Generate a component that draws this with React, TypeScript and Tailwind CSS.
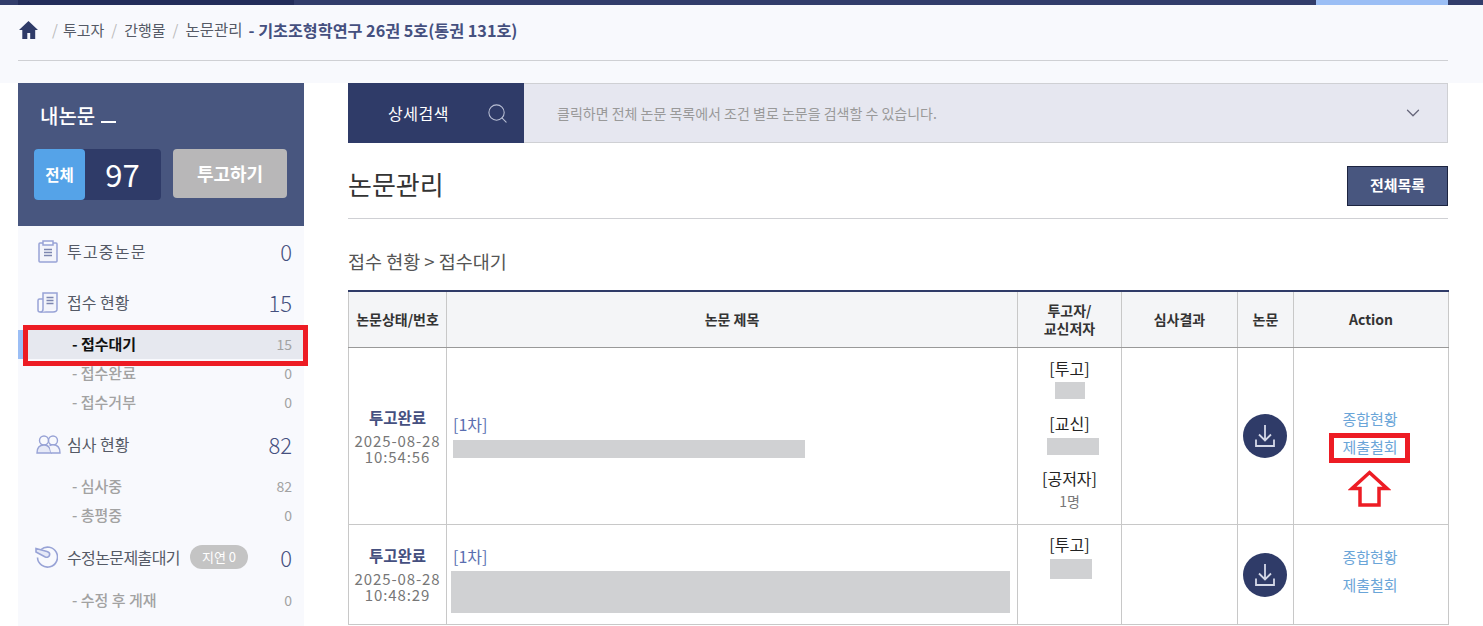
import { Search, ChevronDown } from 'lucide-react';

const FONT = '"Noto Sans CJK KR", "Noto Sans", sans-serif';

function ClipboardIcon() {
  return (
    <svg width="20" height="23" viewBox="0 0 20 23" fill="none" stroke="#98a3d6" strokeWidth="1.5" className="ml-[3px]">
      <rect x="1" y="3" width="18" height="19" rx="1" fill="#f3f4fb" />
      <rect x="5" y="1" width="10" height="4" fill="#f8f9fd" />
      <path d="M6 9.500h8M6 12.500h8M6 15.500h8" stroke="#7d86b0" />
    </svg>
  );
}

function DocsIcon() {
  return (
    <svg width="21" height="21" viewBox="0 0 21 21" fill="none" stroke="#98a3d6" strokeWidth="1.5" className="ml-[2px]">
      <path d="M6 7H2.500A1.500 1.500 0 0 0 1 8.500V18a2 2 0 0 0 2 2h13c2 0 4-1 4-3" />
      <path d="M3.500 20c1.500 0 2.500-1 2.500-3V1h14v16" fill="#f3f4fb" />
      <path d="M9.500 5.500h7M9.500 8.500h7M9.500 11.500h7" stroke="#7d86b0" />
    </svg>
  );
}

function PeopleIcon() {
  return (
    <svg width="25" height="19" viewBox="0 0 25 19" fill="none" stroke="#98a3d6" strokeWidth="1.4" className="ml-[1px]">
      <circle cx="8" cy="5.500" r="4.500" />
      <circle cx="17" cy="5.500" r="4.500" />
      <path d="M1 18c0-5 2.500-8 7-8 3 0 5 1.500 6 4l1 4z" fill="#e6e9f7" />
      <path d="M13.500 10.500c1-.5 2.300-.7 3.500-.7 4.500 0 7 3.200 7 8.200H15" fill="#f3f4fb" />
    </svg>
  );
}

function TimerIcon() {
  return (
    <svg width="23" height="22" viewBox="0 0 23 22" fill="none" stroke="#98a3d6" strokeWidth="1.6">
      <path d="M6 3.500a10 10 0 1 1-3.500 8" />
      <path d="M1 2.500 12 5.500c2 .6 3 2 2.600 3.500-.5 2-2.500 2.800-4.300 2L1 6z" fill="#e6e9f7" />
    </svg>
  );
}

function DownloadIcon() {
  return (
    <svg width="22" height="24" viewBox="0 0 22 24" fill="none" stroke="#d5d9e8" strokeWidth="1.8">
      <path d="M11 1v15M5 10.500l6 6 6-6" />
      <path d="M2 15.500V22h18v-6.500" />
    </svg>
  );
}

function MenuRow({ icon, label, count, labelClass, badge }: { icon: React.ReactNode; label: string; count: string; labelClass?: string; badge?: boolean }) {
  return (
    <div className="flex items-center h-[36px] pl-[17px] pr-[12px]">
      <div className="w-[32px] shrink-0 flex items-center">{icon}</div>
      <span className={`text-[16px] text-[#555a66] ${labelClass ?? ''}`}>{label}</span>
      {badge && (
        <span className="ml-[10px] w-[58px] h-[24px] rounded-full bg-[#c4c4c4] text-white text-[13px] flex items-center justify-center">지연 0</span>
      )}
      <span className="ml-auto text-[22px] font-light text-[#45507f]">{count}</span>
    </div>
  );
}

function SubRow({ label, count, active }: { label: string; count: string; active?: boolean }) {
  return (
    <div className={active ? 'flex items-center h-[29px] pl-[48px] pr-[12px] text-[14px] bg-[#e6e8ef] border-l-[6px] border-[#9bbef5]' : 'flex items-center h-[29px] pl-[54px] pr-[12px] text-[14px]'}>
      <span className={active ? 'text-[15px] font-bold text-[#111]' : 'text-[15px] font-medium text-[#a2a2a2]'}>- {label}</span>
      <span className="ml-auto text-[#a2a2a2]">{count}</span>
    </div>
  );
}

function Redact({ className }: { className: string }) {
  return <div className={`bg-[#d0d1d3] ${className}`} />;
}

function DownloadBtn() {
  return (
    <div className="w-[44px] h-[44px] rounded-full bg-[#2f3b68] flex items-center justify-center ml-[5px]">
      <DownloadIcon />
    </div>
  );
}

function StatusCell({ date, time }: { date: string; time: string }) {
  return (
    <td className="border border-[#c8c8c8] text-center align-middle">
      <div className="text-[15.500px] leading-[20px] font-bold text-[#45507f]">투고완료</div>
      <div className="text-[15px] leading-[16px] mt-[6px] text-[#777] tracking-[0.900px] whitespace-nowrap">{date}<br />{time}</div>
    </td>
  );
}

export default function App() {
  return (
    <div className="relative w-[1483px] h-[626px] overflow-hidden bg-white" style={{ fontFamily: FONT }}>
      {/* top bar */}
      <div className="flex h-[5px] bg-[#323d6b] pl-[18px] pr-[35px]">
        <div className="w-[276px] bg-[#232d5a]" />
        <div className="w-[132px] ml-auto bg-[#9bbef5]" />
      </div>

      {/* breadcrumb */}
      <div className="h-[78px] bg-[#f8f9fd] px-[18px]">
        <div className="w-[1430px] h-[56px] border-b border-[#cfd0d4] flex items-center pb-[5px] text-[15px] text-[#555a66]">
          <svg width="19" height="18" viewBox="0 0 19 18" fill="#2f3b68" className="ml-[1px] mr-[14px]">
            <path d="M9.500 0 19 9h-2.800v9h-5v-6H8.300v6h-5V9H0z" />
          </svg>
          <span className="text-[#bbb] mr-[5px]">/</span>
          <span>투고자</span>
          <span className="text-[#bbb] mx-[7px]">/</span>
          <span>간행물</span>
          <span className="text-[#bbb] mx-[7px]">/</span>
          <span className="text-[15.500px]">논문관리</span>
          <span className="ml-[6px] text-[16.200px] font-bold text-[#45507f]">- 기초조형학연구 26권 5호(통권 131호)</span>
        </div>
      </div>

      <div className="flex pl-[18px]">
        {/* sidebar */}
        <aside className="w-[286px] shrink-0">
          <div className="h-[143px] bg-[#48567f] px-[16px] pt-[18px]">
            <div className="pl-[6px] flex items-center text-[20px] font-medium text-white h-[30px]">
              내논문
              <span className="ml-[6px] mt-[11px] w-[15px] h-[2px] bg-white" />
            </div>
            <div className="flex mt-[18px]">
              <div className="flex w-[127px] h-[51px] rounded-[4px] bg-[#2f3b68]">
                <div className="w-[51px] rounded-[4px] bg-[#55a3e8] text-white text-[15.500px] font-bold flex items-center justify-center">전체</div>
                <div className="flex-1 flex items-center justify-center text-[31px] text-white pr-[1px]">97</div>
              </div>
              <div className="ml-[12px] w-[114px] h-[49px] rounded-[4px] bg-[#b8b7b8] text-white text-[18px] font-bold flex items-center justify-center">투고하기</div>
            </div>
          </div>
          <div className="h-[400px] bg-[#f8f9fd] pt-[7px]">
            <MenuRow icon={<ClipboardIcon />} label="투고중논문" count="0" labelClass="tracking-[1.200px]" />
            <div className="h-[15px]" />
            <MenuRow icon={<DocsIcon />} label="접수 현황" count="15" />
            <div className="h-[10px]" />
            <SubRow label="접수대기" count="15" active />
            <SubRow label="접수완료" count="0" />
            <SubRow label="접수거부" count="0" />
            <div className="h-[9px]" />
            <MenuRow icon={<PeopleIcon />} label="심사 현황" count="82" />
            <div className="h-[10px]" />
            <SubRow label="심사중" count="82" />
            <SubRow label="총평중" count="0" />
            <div className="h-[9px]" />
            <MenuRow icon={<TimerIcon />} label="수정논문제출대기" count="0" labelClass="tracking-[-0.600px]" badge />
            <div className="h-[11px]" />
            <SubRow label="수정 후 게재" count="0" />
          </div>
        </aside>

        {/* main */}
        <main className="ml-[44px] w-[1100px]">
          <div className="flex h-[60px]">
            <div className="w-[176px] bg-[#2f3b68] flex items-center text-white text-[16px] tracking-[0.500px] pl-[40px]">
              상세검색
              <Search size={23} strokeWidth={1.100} className="ml-[37px] text-[#b9bfd4]" />
            </div>
            <div className="flex-1 flex items-center bg-[#e6e7f0] border border-l-0 border-[#cfd0d4] pl-[33px] pr-[23px] text-[14px] text-[#999]">
              클릭하면 전체 논문 목록에서 조건 별로 논문을 검색할 수 있습니다.
              <ChevronDown size={22} strokeWidth={1.400} className="ml-auto text-[#66667a]" />
            </div>
          </div>

          <div className="flex items-center justify-between h-[76px] border-b border-[#cfd0d4] mb-[26px]">
            <h1 className="text-[26px] text-[#333] font-normal pt-[5px]">논문관리</h1>
            <button className="w-[101px] h-[40px] mt-[10px] bg-[#48567f] border border-[#1c2440] text-white text-[15px] font-bold">전체목록</button>
          </div>

          <div className="text-[18.500px] text-[#555] leading-[32px] h-[30px]">접수 현황 &gt; 접수대기</div>

          <table className="mt-[15px] w-[1100px] table-fixed border-collapse border-t-2 border-t-[#2f3b68]">
            <colgroup>
              <col className="w-[98px]" />
              <col className="w-[571px]" />
              <col className="w-[104px]" />
              <col className="w-[116px]" />
              <col className="w-[56px]" />
              <col className="w-[155px]" />
            </colgroup>
            <thead>
              <tr className="h-[56px] bg-[#f4f5f7] text-[14px] font-bold text-[#333]">
                <th className="border border-t-0 border-[#c8c8c8] border-b-[#999] whitespace-nowrap">논문상태/번호</th>
                <th className="border border-t-0 border-[#c8c8c8] border-b-[#999]">논문 제목</th>
                <th className="border border-t-0 border-[#c8c8c8] border-b-[#999] leading-[18px]">투고자/<br />교신저자</th>
                <th className="border border-t-0 border-[#c8c8c8] border-b-[#999]">심사결과</th>
                <th className="border border-t-0 border-[#c8c8c8] border-b-[#999]">논문</th>
                <th className="border border-t-0 border-[#c8c8c8] border-b-[#999]">Action</th>
              </tr>
            </thead>
            <tbody>
              <tr className="h-[177px]">
                <StatusCell date="2025-08-28" time="10:54:56" />
                <td className="border border-[#c8c8c8] pl-[6px] align-middle">
                  <div className="text-[16px] text-[#5a6eb0] leading-[20px]">[1차]</div>
                  <Redact className="w-[352px] h-[18px] mt-[6px]" />
                </td>
                <td className="border border-[#c8c8c8] align-top pt-[10px] text-center text-[16px] text-[#222]">
                  <div className="leading-[20px]">[투고]</div>
                  <Redact className="w-[30px] h-[17px] mx-auto mt-[4px]" />
                  <div className="leading-[20px] mt-[14px]">[교신]</div>
                  <Redact className="w-[52px] h-[17px] ml-[29px] mt-[5px]" />
                  <div className="leading-[20px] mt-[13px]">[공저자]</div>
                  <div className="leading-[20px] mt-[3px] text-[14px] text-[#777]">1명</div>
                </td>
                <td className="border border-[#c8c8c8]" />
                <td className="border border-[#c8c8c8]"><DownloadBtn /></td>
                <td className="border border-[#c8c8c8] text-center text-[15px] text-[#6aa5d8] pb-[6px] pr-[2px]">
                  <div className="leading-[28px]">종합현황</div>
                  <div className="leading-[28px]">제출철회</div>
                </td>
              </tr>
              <tr className="h-[100px]">
                <StatusCell date="2025-08-28" time="10:48:29" />
                <td className="border border-[#c8c8c8] pl-[4px] align-top pt-[21px]">
                  <div className="text-[16px] text-[#5a6eb0] leading-[20px] pl-[2px]">[1차]</div>
                  <Redact className="w-[559px] h-[42px] mt-[5px]" />
                </td>
                <td className="border border-[#c8c8c8] align-top pt-[9px] text-center text-[16px] text-[#222]">
                  <div className="leading-[20px]">[투고]</div>
                  <Redact className="w-[42px] h-[20px] ml-[32px] mt-[5px]" />
                </td>
                <td className="border border-[#c8c8c8]" />
                <td className="border border-[#c8c8c8] pt-[2px]"><DownloadBtn /></td>
                <td className="border border-[#c8c8c8] text-center text-[15px] text-[#6aa5d8] align-top pt-[18px] pr-[2px]">
                  <div className="leading-[28px]">종합현황</div>
                  <div className="leading-[28px]">제출철회</div>
                </td>
              </tr>
            </tbody>
          </table>
        </main>
      </div>

      {/* red annotations drawn over the capture */}
      <div className="absolute left-[23px] top-[325px] w-[285px] h-[41px] border-[5px] border-[#ed1c24]" />
      <div className="absolute left-[1329px] top-[433px] w-[81px] h-[30px] border-[5px] border-[#ed1c24]" />
      <svg className="absolute left-[1348px] top-[470px]" width="43" height="37" viewBox="0 0 43 37" fill="#fff" stroke="#ed1c24" strokeWidth="3.500">
        <path d="M21.500 2.500 39 18.500H31V35H12V18.500H4z" />
      </svg>
    </div>
  );
}
